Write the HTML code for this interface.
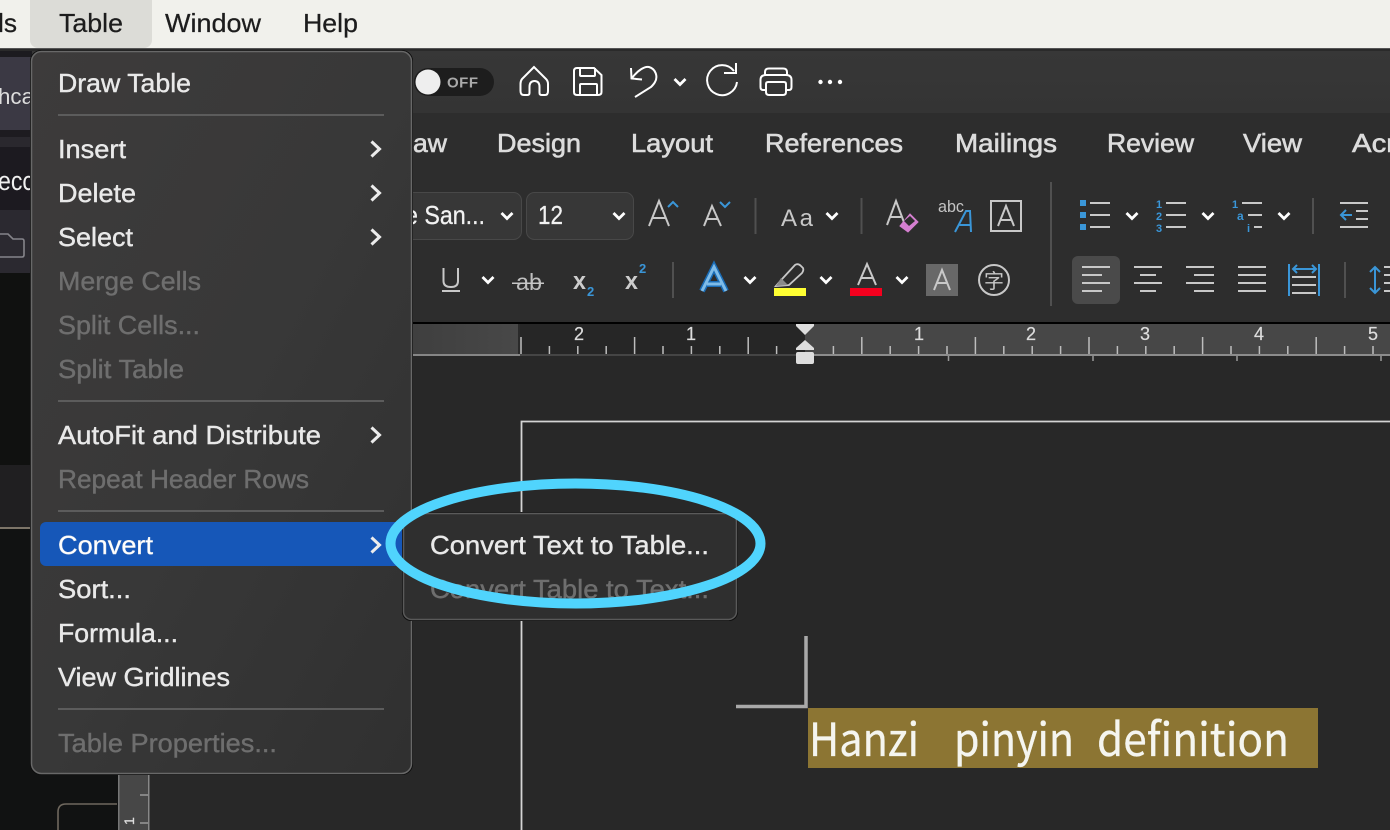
<!DOCTYPE html>
<html><head><meta charset="utf-8"><title>Word Table menu</title>
<style>
html,body{margin:0;padding:0;background:#282828;width:1390px;height:830px;overflow:hidden}
svg{display:block;font-family:"Liberation Sans",sans-serif}
.m{font-size:26px;fill:#e9e9e9;stroke:#e9e9e9;stroke-width:.4}
.d{font-size:26px;fill:#6e6e6e;stroke:#6e6e6e;stroke-width:.4}
.b{font-size:26px;fill:#1d1d1d;stroke:#1d1d1d;stroke-width:.25}
.t{font-size:26px;fill:#dcdcdc;stroke:#dcdcdc;stroke-width:.6}
.n{font-size:18px;fill:#ddd;stroke:#ddd;stroke-width:.2}
.g{fill:none;stroke:#c8c8c8;stroke-width:2}
.w{fill:none;stroke:#fff;stroke-width:2}
.bl{fill:none;stroke:#3a96d8;stroke-width:2}
</style></head><body>
<svg width="1390" height="830" viewBox="0 0 1390 830" xmlns="http://www.w3.org/2000/svg">
<defs>
<path id="chev" d="M-5.500 -3L0 2.500L5.500 -3" fill="none" stroke="#fff" stroke-width="2.800"/>
<path id="mchev" d="M-5.500 -7.500L2.500 0L-5.500 7.500" fill="none" stroke="#ececec" stroke-width="3"/>
<linearGradient id="mg" x1="0" y1="0" x2="1" y2="1"><stop offset="0" stop-color="#3d3b3b"/><stop offset=".5" stop-color="#383838"/><stop offset="1" stop-color="#303030"/></linearGradient>
<linearGradient id="tb" x1="0" y1="0" x2="0" y2="1"><stop offset="0" stop-color="#373737"/><stop offset="1" stop-color="#343434"/></linearGradient>
<linearGradient id="rg" x1="0" y1="0" x2="1" y2="0"><stop offset="0" stop-color="#3c3c3c"/><stop offset="1" stop-color="#484848"/></linearGradient>
</defs>

<!-- app background -->
<rect width="1390" height="830" fill="#282828"/>
<rect x="0" y="50" width="1390" height="63" fill="url(#tb)"/>
<rect x="0" y="113" width="1390" height="209" fill="#2d2d2d"/>
<rect x="0" y="322" width="1390" height="2" fill="#000"/>
<rect x="0" y="324" width="1390" height="32" fill="#474747"/>
<rect x="0" y="356" width="1390" height="65" fill="#282828"/>

<!-- left sidebar -->
<rect x="0" y="50" width="32" height="7" fill="#1c1b1f"/>
<rect x="0" y="57" width="32" height="73" fill="#3b3944"/>
<rect x="0" y="130" width="32" height="7" fill="#1d1b20"/>
<rect x="0" y="137" width="32" height="10" fill="#2a282e"/>
<rect x="0" y="147" width="32" height="63" fill="#1c1a20"/>
<rect x="0" y="210" width="32" height="63" fill="#2b2930"/>
<rect x="0" y="273" width="32" height="192" fill="#101110"/>
<rect x="0" y="465" width="32" height="62" fill="#201f21"/>
<rect x="0" y="527" width="32" height="2" fill="#7c7468"/>
<rect x="0" y="529" width="119" height="301" fill="#111212"/>
<text x="-2" y="104" font-size="22" fill="#ddd" textLength="36" lengthAdjust="spacingAndGlyphs">hca</text>
<text x="-2" y="190" font-size="27" fill="#f0f0f0" textLength="36" lengthAdjust="spacingAndGlyphs">ecc</text>
<path d="M-2 234H8L13 239H22Q24 239 24 241V255Q24 257 22 257H-2" fill="none" stroke="#85848a" stroke-width="1.600"/>
<rect x="119" y="770" width="30" height="60" fill="#474747"/>
<rect x="118" y="770" width="1.500" height="60" fill="#777"/>
<rect x="148" y="770" width="1.500" height="60" fill="#888"/>
<path d="M140 795H148M140 823H148" stroke="#999" stroke-width="1.500"/>
<text transform="translate(134,825) rotate(-90)" font-size="14" fill="#ddd" stroke="#ddd" stroke-width=".3">1</text>
<path d="M117 804H66Q58 804 58 812V830" fill="none" stroke="#6f685e" stroke-width="1.600"/>

<!-- menu bar -->
<rect x="0" y="0" width="1390" height="48" fill="#f1f1ec"/>
<rect x="0" y="48" width="1390" height="1" fill="#555"/>
<rect x="0" y="49" width="1390" height="2" fill="#2a2a2a"/>
<rect x="30" y="-8" width="122" height="56" rx="8" fill="#dcdcd7"/>
<text class="b" x="-2" y="32" textLength="19" lengthAdjust="spacingAndGlyphs">ls</text>
<text class="b" x="59" y="32" textLength="64" lengthAdjust="spacingAndGlyphs">Table</text>
<text class="b" x="165" y="32" textLength="96" lengthAdjust="spacingAndGlyphs">Window</text>
<text class="b" x="303" y="32" textLength="55" lengthAdjust="spacingAndGlyphs">Help</text>

<!-- toolbar -->
<rect x="414" y="68" width="80" height="28" rx="14" fill="#1d1d1d"/>
<circle cx="428" cy="82" r="12.500" fill="#eeeeee"/>
<text x="447" y="87.500" font-size="15" font-weight="700" fill="#aaa" textLength="31" lengthAdjust="spacing">OFF</text>
<path class="w" d="M534 67L522 79Q520.500 81 520.500 84V91Q520.500 95 524 95H527Q529.500 95 529.500 93V87Q529.500 81 534.500 81Q539.500 81 539.500 87V93Q539.500 95 542 95H545Q548 95 548 91V84Q548 81 546 79Z"/>
<path class="w" d="M577 68H594L601.500 75V92Q601.500 95 598 95H577Q574 95 574 92V71Q574 68 577 68ZM580 68V75Q580 76 581 76H594Q595 76 595 75V68M580 95V85Q580 84 581 84H596Q597 84 597 85V95"/>
<path class="w" d="M631 68L631.500 78.500L642 79.500M632 78C638 70 645 66 649 67C656 69 658 77 655 82Q654 84 651 87L635 97"/>
<use href="#chev" x="680" y="82"/>
<path class="w" d="M734 71A15 15 0 1 0 737 82M724 73H736V63"/>
<path class="w" d="M765 75V72Q765 68.500 769 68.500H783Q787 68.500 787 72V75M766 90H763Q760.500 90 760.500 87V80Q760.500 75 766 75H786Q791.500 75 791.500 80V87Q791.500 90 789 90H786M768 82H784Q786 82 786 84V92Q786 95 783 95H769Q766 95 766 92V84Q766 82 768 82Z"/>
<circle cx="820.500" cy="82" r="2.200" fill="#fff"/><circle cx="830" cy="82" r="2.200" fill="#fff"/><circle cx="840" cy="82" r="2.200" fill="#fff"/>

<!-- tabs -->
<text class="t" x="413" y="152" textLength="34" lengthAdjust="spacingAndGlyphs">aw</text>
<text class="t" x="497" y="152" textLength="84" lengthAdjust="spacingAndGlyphs">Design</text>
<text class="t" x="631" y="152" textLength="82" lengthAdjust="spacingAndGlyphs">Layout</text>
<text class="t" x="765" y="152" textLength="138" lengthAdjust="spacingAndGlyphs">References</text>
<text class="t" x="955" y="152" textLength="102" lengthAdjust="spacingAndGlyphs">Mailings</text>
<text class="t" x="1107" y="152" textLength="87" lengthAdjust="spacingAndGlyphs">Review</text>
<text class="t" x="1243" y="152" textLength="59" lengthAdjust="spacingAndGlyphs">View</text>
<text class="t" x="1352" y="152" textLength="44" lengthAdjust="spacingAndGlyphs">Acr</text>

<!-- font boxes -->
<rect x="380" y="192.500" width="141.500" height="47" rx="8" fill="#373737" stroke="#484848"/>
<rect x="526.500" y="192.500" width="107" height="47" rx="8" fill="#373737" stroke="#484848"/>
<text x="405" y="224" font-size="26" fill="#f2f2f2" stroke="#f2f2f2" stroke-width=".3" textLength="80" lengthAdjust="spacingAndGlyphs">e San...</text>
<text x="538" y="224" font-size="26" fill="#f2f2f2" stroke="#f2f2f2" stroke-width=".3" textLength="25" lengthAdjust="spacingAndGlyphs">12</text>
<use href="#chev" x="507" y="216"/><use href="#chev" x="619" y="216"/>

<!-- row 1 icons -->
<path class="g" stroke-width="1.800" d="M649 226L659 201L669 226M652 218H666"/>
<path class="bl" d="M668 207L673 202L678 207"/>
<path class="g" d="M704 226L712 206L721 226M706.500 219H718.500"/>
<path class="bl" d="M720 202L725 207L730 202"/>
<rect x="754.500" y="198" width="2" height="36" fill="#505050"/>
<text x="781" y="226" font-size="24" fill="#c8c8c8" textLength="32" lengthAdjust="spacing">Aa</text>
<use href="#chev" x="832" y="216"/>
<rect x="860.500" y="198" width="2" height="36" fill="#505050"/>
<path class="g" d="M887 225L896 201L905 225M890 217H901"/>
<path d="M900 226L910 214L918 222L908 232Z" fill="#d57fd0" stroke="#d57fd0" stroke-width="1"/>
<path d="M904 221L910 216L915 221L909 226Z" fill="#2d2d2d"/>
<text x="938" y="212" font-size="17" fill="#c4c4c4" textLength="26" lengthAdjust="spacingAndGlyphs">abc</text>
<path class="bl" d="M955 232L966 211H970L971 232M959.500 225H970"/>
<rect x="991" y="201" width="30" height="30" fill="none" stroke="#c8c8c8" stroke-width="2"/>
<path class="g" d="M998 226L1006 206L1014 226M1001 220H1011"/>
<rect x="1050" y="182" width="2" height="124" fill="#505050"/>
<rect x="1080" y="200" width="6" height="6" fill="#3a96d8"/><rect x="1080" y="212" width="6" height="6" fill="#3a96d8"/><rect x="1080" y="224" width="6" height="6" fill="#3a96d8"/>
<path class="g" d="M1090 203H1110M1090 215H1110M1090 227H1110"/>
<use href="#chev" x="1132" y="216"/>
<text x="1156" y="208" font-size="11" font-weight="700" fill="#3a96d8">1</text>
<text x="1156" y="220" font-size="11" font-weight="700" fill="#3a96d8">2</text>
<text x="1156" y="232" font-size="11" font-weight="700" fill="#3a96d8">3</text>
<path class="g" d="M1166 203H1186M1166 215H1186M1166 227H1186"/>
<use href="#chev" x="1208" y="216"/>
<text x="1232" y="208" font-size="11" font-weight="700" fill="#3a96d8">1</text>
<text x="1237" y="220" font-size="12" font-weight="700" fill="#3a96d8">a</text>
<text x="1247" y="232" font-size="11" font-weight="700" fill="#3a96d8">i</text>
<path class="g" d="M1242 203H1262M1248 215H1262M1254 227H1262"/>
<use href="#chev" x="1284" y="216"/>
<rect x="1312" y="198" width="2" height="36" fill="#505050"/>
<path class="g" d="M1340 203H1368M1356 211H1368M1356 219H1368M1340 227H1368"/>
<path class="bl" d="M1352 215H1341M1346 210L1341 215L1346 220"/>

<!-- row 2 icons -->
<path class="g" d="M443.500 268V281Q443.500 287 451 287Q458 287 458 281V268"/>
<rect x="442" y="290" width="18" height="2" fill="#c8c8c8"/>
<use href="#chev" x="488" y="280"/>
<text x="516" y="290" font-size="23" fill="#c0c0c0" textLength="26" lengthAdjust="spacingAndGlyphs">ab</text>
<rect x="512" y="282.500" width="32" height="1.500" fill="#c8c8c8"/>
<text x="573" y="289" font-size="24" font-weight="700" fill="#ccc" textLength="13" lengthAdjust="spacingAndGlyphs">x</text>
<text x="587" y="296" font-size="13" font-weight="700" fill="#3a96d8">2</text>
<text x="625" y="289" font-size="24" font-weight="700" fill="#ccc" textLength="13" lengthAdjust="spacingAndGlyphs">x</text>
<text x="639" y="273" font-size="13" font-weight="700" fill="#3a96d8">2</text>
<rect x="672" y="262" width="2" height="36" fill="#505050"/>
<path d="M702 291L714 267L726 291M707 284H721" fill="none" stroke="#1a6cb6" stroke-width="6"/>
<path d="M702 291L714 267L726 291M707 284H721" fill="none" stroke="#7fbce8" stroke-width="3"/>
<use href="#chev" x="750" y="280"/>
<path d="M776 286L783 278L795 265Q798 263 801 266L803 268Q804 270 802 273L789 285Z" fill="none" stroke="#c8c8c8" stroke-width="1.800"/>
<path d="M776 286L781 278L788 285Z" fill="#8a8a8a"/>
<rect x="774" y="288" width="32" height="8" fill="#ffff33"/>
<use href="#chev" x="826" y="280"/>
<path class="g" d="M858 285L867 264L876 285M861 278H873"/>
<rect x="850" y="288" width="32" height="8" fill="#f5001e"/>
<use href="#chev" x="902" y="280"/>
<rect x="926" y="264" width="32" height="32" fill="#686868"/>
<path class="g" stroke-width="2" d="M934 290L942 270L950 290M937 283H947"/>
<circle cx="994" cy="280" r="15" fill="none" stroke="#c8c8c8" stroke-width="2"/>
<text x="984" y="288" font-size="20" fill="#c8c8c8" style="font-family:'Noto Sans CJK SC',sans-serif">字</text>

<rect x="1072" y="256" width="48" height="48" rx="6" fill="#4a4a4a"/>
<path class="g" d="M1082 267H1110M1082 275H1102M1082 283H1110M1082 291H1102"/>
<path class="g" d="M1134 267H1162M1140 275H1156M1134 283H1162M1140 291H1156"/>
<path class="g" d="M1186 267H1214M1194 275H1214M1186 283H1214M1194 291H1214"/>
<path class="g" d="M1238 267H1266M1238 275H1266M1238 283H1266M1238 291H1266"/>
<path class="bl" d="M1289 264V296M1319 264V296M1293 269H1316M1297 265L1293 269L1297 273M1312 265L1316 269L1312 273"/>
<path class="g" d="M1292 277H1316M1292 285H1316M1292 293H1316"/>
<rect x="1344" y="262" width="2" height="36" fill="#505050"/>
<path class="bl" d="M1375 267V293M1370 272L1375 267L1380 272M1370 288L1375 293L1380 288"/>
<path class="g" d="M1384 267H1392M1384 275H1392M1384 283H1392M1384 291H1392"/>

<!-- horizontal ruler -->
<rect x="380" y="324" width="138" height="31" fill="url(#rg)"/>
<rect x="520" y="324" width="285" height="30" fill="#262626"/>
<rect x="518" y="324" width="2" height="30" fill="#2a2a2a"/>
<rect x="380" y="354" width="140" height="2" fill="#868686"/>
<rect x="520" y="354" width="285" height="2" fill="#454545"/>
<rect x="805" y="354" width="585" height="2" fill="#8c8c8c"/>
<g stroke="#bdbdbd" stroke-width="1.500">
<path d="M521 337V354M634.600 337V354M748.200 337V354M861.800 337V354M975.400 337V354M1089 337V354M1202.600 337V354M1316.200 337V354"/>
<path d="M549.400 346V354M577.800 346V354M606.200 346V354M663 346V354M691.400 346V354M719.800 346V354M776.600 346V354M833.400 346V354M890.200 346V354M918.600 346V354M947 346V354M1003.800 346V354M1032.200 346V354M1060.600 346V354M1117.400 346V354M1145.800 346V354M1174.200 346V354M1231 346V354M1259.400 346V354M1287.800 346V354M1344.600 346V354M1373 346V354"/>
</g>
<path d="M948.500 356V361M1093 356V361M1237 356V361M1381 356V361" stroke="#999" stroke-width="1.500"/>
<text class="n" x="574" y="340">2</text><text class="n" x="686" y="340">1</text>
<text class="n" x="914" y="340">1</text><text class="n" x="1026" y="340">2</text><text class="n" x="1140" y="340">3</text><text class="n" x="1254" y="340">4</text><text class="n" x="1368" y="340">5</text>
<path d="M796 324H814V326L805 335L796 326Z" fill="#ddd"/>
<path d="M805 340L814 348V350H796V348Z" fill="#ddd"/>
<rect x="796" y="352" width="18" height="12" rx="2" fill="#ddd"/>

<!-- document page -->
<path d="M521.500 830V421.500H1390" fill="none" stroke="#d4d4d4" stroke-width="1.800"/>
<path d="M806 636V706.500H736" fill="none" stroke="#a9a9a9" stroke-width="3.500"/>
<rect x="808" y="708" width="510" height="60" fill="#8c7533"/>
<g font-size="46" fill="#f5f5ef" stroke="#f5f5ef" stroke-width=".3" style="font-family:'Noto Sans CJK SC','WenQuanYi Zen Hei',sans-serif">
<text x="809" y="756" textLength="110" lengthAdjust="spacingAndGlyphs">Hanzi</text>
<text x="954" y="756" textLength="120" lengthAdjust="spacingAndGlyphs">pinyin</text>
<text x="1097" y="756" textLength="192" lengthAdjust="spacingAndGlyphs">definition</text>
</g>

<!-- Table menu -->
<rect x="30" y="50" width="383" height="725" rx="11" fill="#0d0d0d"/>
<rect x="31.500" y="51.500" width="380" height="722" rx="10" fill="url(#mg)" stroke="#686868" stroke-width="1.500"/>
<path d="M58 115H384M58 401H384M58 511H384M58 709H384" stroke="#5c5c5c" stroke-width="2"/>
<rect x="40" y="522" width="364" height="44" rx="6" fill="#1657b8"/>
<text class="m" x="58" y="92" textLength="133" lengthAdjust="spacingAndGlyphs">Draw Table</text>
<text class="m" x="58" y="158" textLength="68" lengthAdjust="spacingAndGlyphs">Insert</text>
<text class="m" x="58" y="202" textLength="78" lengthAdjust="spacingAndGlyphs">Delete</text>
<text class="m" x="58" y="246" textLength="75" lengthAdjust="spacingAndGlyphs">Select</text>
<text class="d" x="58" y="290" textLength="143" lengthAdjust="spacingAndGlyphs">Merge Cells</text>
<text class="d" x="58" y="334" textLength="142" lengthAdjust="spacingAndGlyphs">Split Cells...</text>
<text class="d" x="58" y="378" textLength="126" lengthAdjust="spacingAndGlyphs">Split Table</text>
<text class="m" x="58" y="444" textLength="263" lengthAdjust="spacingAndGlyphs">AutoFit and Distribute</text>
<text class="d" x="58" y="488" textLength="251" lengthAdjust="spacingAndGlyphs">Repeat Header Rows</text>
<text class="m" x="58" y="554" textLength="95" lengthAdjust="spacingAndGlyphs" style="fill:#fff">Convert</text>
<text class="m" x="58" y="598" textLength="73" lengthAdjust="spacingAndGlyphs">Sort...</text>
<text class="m" x="58" y="642" textLength="120" lengthAdjust="spacingAndGlyphs">Formula...</text>
<text class="m" x="58" y="686" textLength="172" lengthAdjust="spacingAndGlyphs">View Gridlines</text>
<text class="d" x="58" y="752" textLength="219" lengthAdjust="spacingAndGlyphs">Table Properties...</text>
<use href="#mchev" x="377" y="149"/><use href="#mchev" x="377" y="193"/><use href="#mchev" x="377" y="237"/><use href="#mchev" x="377" y="435"/><use href="#mchev" x="377" y="545"/>

<!-- submenu -->
<rect x="402" y="512" width="336" height="109" rx="9" fill="#0e0e0e"/>
<rect x="403.500" y="513.500" width="333" height="106" rx="8" fill="#2f2f2f" stroke="#5a5a5a" stroke-width="1.500"/>
<text class="m" x="430" y="554" textLength="279" lengthAdjust="spacingAndGlyphs">Convert Text to Table...</text>
<text class="d" x="430" y="598" textLength="279" lengthAdjust="spacingAndGlyphs">Convert Table to Text...</text>

<!-- callout ellipse -->
<ellipse cx="575.500" cy="543.500" rx="185" ry="60" fill="none" stroke="#50d4fd" stroke-width="10"/>
</svg>
</body></html>
